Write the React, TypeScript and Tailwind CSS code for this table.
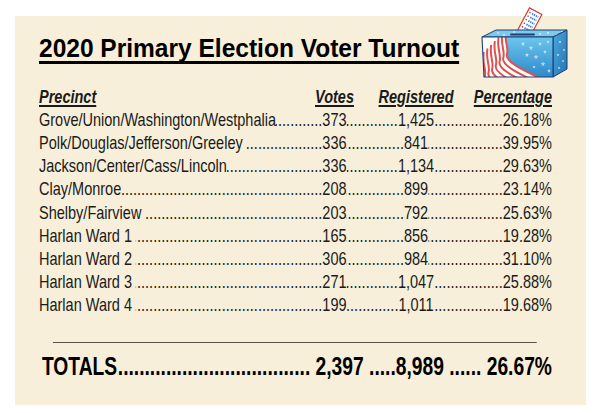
import React from "react";

const rows: [string, string, string, string][] = [
  ["Grove/Union/Washington/Westphalia", "373", "1,425", "26.18%"],
  ["Polk/Douglas/Jefferson/Greeley ", "336", "841", "39.95%"],
  ["Jackson/Center/Cass/Lincoln", "336", "1,134", "29.63%"],
  ["Clay/Monroe", "208", "899", "23.14%"],
  ["Shelby/Fairview ", "203", "792", "25.63%"],
  ["Harlan Ward 1 ", "165", "856", "19.28%"],
  ["Harlan Ward 2 ", "306", "984", "31.10%"],
  ["Harlan Ward 3 ", "271", "1,047", "25.88%"],
  ["Harlan Ward 4 ", "199", "1,011", "19.68%"],
];

const DOTS = ".".repeat(160);

function Leader({ className = "" }: { className?: string }) {
  return (
    <div className={"flex justify-end overflow-hidden whitespace-nowrap " + className}>
      <span className="shrink-0">{DOTS}</span>
    </div>
  );
}

function starPoints(cx: number, cy: number, r: number) {
  const pts: string[] = [];
  for (let i = 0; i < 10; i++) {
    const rr = i % 2 === 0 ? r : r * 0.45;
    const a = (Math.PI / 5) * i - Math.PI / 2;
    pts.push(`${(cx + rr * Math.cos(a)).toFixed(2)},${(cy + rr * Math.sin(a)).toFixed(2)}`);
  }
  return pts.join(" ");
}

function BallotBox() {
  const frontStars: [number, number, number][] = [
    [45, 40, 2], [53, 44, 2.2], [62, 40, 1.8], [49, 51, 2], [58, 53, 2.3],
    [67, 48, 1.8], [65, 60, 2.2], [71, 67, 1.8], [56, 63, 1.6], [70, 38, 1.6],
  ];
  const topStars: [number, number, number][] = [
    [26, 31, 1.3], [36, 28, 1.2], [62, 30, 1.2], [70, 29, 1.3], [79, 31, 1.2], [84, 27.5, 1.1], [20, 29, 1.1],
  ];
  const sideStars: [number, number, number][] = [
    [82, 38, 1.3], [86, 46, 1.2], [80, 51, 1.3], [85, 57, 1.1], [81, 64, 1.2],
  ];
  const curve = "M28 26 C 26 38, 31 43, 29 50 S 40 64, 70 78";
  return (
    <svg width="92" height="76" viewBox="0 0 92 76" className="block shrink-0">
      <defs>
        <linearGradient id="fg" x1="0" y1="0" x2="0" y2="1">
          <stop offset="0" stopColor="#6cc6ee" />
          <stop offset="1" stopColor="#2d8acb" />
        </linearGradient>
        <linearGradient id="sg" x1="0" y1="0" x2="1" y2="1">
          <stop offset="0" stopColor="#4aa9de" />
          <stop offset="1" stopColor="#2672b2" />
        </linearGradient>
        <clipPath id="fc">
          <polygon points="4,33 75,33 75,73 6,73" />
        </clipPath>
      </defs>
      <g transform="translate(45 31) rotate(28)">
        <rect x="-7" y="-27" width="14" height="27" fill="#ffffff" stroke="#d23b3b" strokeWidth="1.2" />
        {[-23, -19, -15, -11, -7].map((y) => (
          <line key={y} x1="-2" y1={y} x2="5" y2={y} stroke="#3a7fd0" strokeWidth="1.8" strokeDasharray="1.4 0.7" />
        ))}
        {[-23, -19, -15, -11, -7].map((y) => (
          <circle key={"r" + y} cx="-4.3" cy={y} r="0.8" fill="#d23b3b" />
        ))}
      </g>
      <polygon points="4,33 18,26 89,26 75,33" fill="#7ccbee" stroke="#1e3f73" strokeWidth="1" strokeLinejoin="round" />
      <path d="M33 30.5 L56 30.5" stroke="#1e3f73" strokeWidth="1.8" strokeLinecap="round" />
      {topStars.map(([x, y, r], i) => (
        <polygon key={"t" + i} points={starPoints(x, y, r)} fill="#ffffff" />
      ))}
      <polygon points="75,33 89,26 89,65 75,73" fill="url(#sg)" stroke="#1e3f73" strokeWidth="1" strokeLinejoin="round" />
      {sideStars.map(([x, y, r], i) => (
        <polygon key={"s" + i} points={starPoints(x, y, r)} fill="#ffffff" />
      ))}
      <polygon points="4,33 75,33 75,73 6,73" fill="url(#fg)" />
      <g clipPath="url(#fc)">
        <path d={curve + " L 0 78 L 0 26 Z"} fill="#ffffff" />
        {Array.from({ length: 10 }).map((_, k) => (
          <path
            key={k}
            d={curve}
            transform={`translate(${-3.7 * k} ${3.7 * k})`}
            fill="none"
            stroke="#e0504e"
            strokeWidth="2"
          />
        ))}
      </g>
      {frontStars.map(([x, y, r], i) => (
        <g key={"f" + i}>
          <polygon points={starPoints(x, y, r)} fill="#ffffff" />
          <circle cx={x} cy={y} r={r * 0.3} fill="#3a8fd0" />
        </g>
      ))}
      <polygon points="4,33 75,33 75,73 6,73" fill="none" stroke="#1e3f73" strokeWidth="1.1" strokeLinejoin="round" />
    </svg>
  );
}

const UL = "underline decoration-[1.5px] underline-offset-[2px]";

export default function App() {
  return (
    <div className="w-[600px] h-[413px] overflow-hidden bg-white pt-[16px] pl-[15px] font-['Liberation_Sans',Arial,sans-serif] text-[#1a1a1a]">
      <div className="w-[571px] h-[389px] bg-[#f7efd9] pt-[17px] pl-[24px] pr-[34px]">
        {/* title row */}
        <div className="flex h-[30px] items-start">
          <div className="w-[424px] shrink-0">
            <h1 className="inline-block origin-left scale-x-[0.943] text-[26px] font-bold leading-[30px] text-black underline decoration-[3px] underline-offset-[4px] [text-decoration-skip-ink:none] whitespace-nowrap">
              2020 Primary Election Voter Turnout
            </h1>
          </div>
          <div className="ml-auto -mr-[18px] -mt-[29px]">
            <BallotBox />
          </div>
        </div>

        {/* condensed table area */}
        <div className="w-[513px] overflow-hidden">
          <div className="w-[625.6px] origin-left scale-x-[0.82] mt-[22.5px] text-[17.7px] leading-[23.2px]">
            <div className="flex items-start font-bold italic">
              <div className="flex-1 min-w-0">
                <span className={UL}>Precinct</span>
              </div>
              <div className="w-[29.5px] shrink-0 flex justify-center">
                <span className={"shrink-0 whitespace-nowrap " + UL}>Votes</span>
              </div>
              <div className="w-[190.5px] shrink-0 flex">
                <div className="grow basis-0" />
                <div className="w-0 flex justify-center">
                  <span className={"shrink-0 whitespace-nowrap " + UL}>Registered</span>
                </div>
                <div className="grow basis-[21.1px]" />
              </div>
              <div className="w-[60px] shrink-0 flex justify-end">
                <span className={"shrink-0 whitespace-nowrap " + UL}>Percentage</span>
              </div>
            </div>

            {rows.map(([name, votes, reg, pct]) => (
              <div key={name} className="flex items-start">
                <div className="flex-1 min-w-0 flex">
                  <span className="shrink-0 whitespace-pre">{name}</span>
                  <Leader className="flex-1 min-w-0" />
                </div>
                <span className="shrink-0 whitespace-nowrap">{votes}</span>
                <div className="w-[190.5px] shrink-0 flex">
                  <Leader className="grow basis-0 min-w-0" />
                  <span className="shrink-0 whitespace-nowrap">{reg}</span>
                  <Leader className="grow basis-[21.1px] min-w-0" />
                </div>
                <span className="shrink-0 whitespace-nowrap">{pct}</span>
              </div>
            ))}

            <div className="mt-[24px] ml-[17.1px] w-[590.2px] h-[1.5px] bg-[#57524a]" />
          </div>
        </div>

        <div className="w-[513px] overflow-hidden">
          <div className="w-[693.2px] origin-left scale-x-[0.74] mt-[9px] pl-[4px] flex items-start text-[26px] font-bold leading-[28px] text-black">
            <span className="shrink-0">TOTALS</span>
            <Leader className="flex-1 min-w-0" />
            <span className="shrink-0 whitespace-pre"> 2,397 .....8,989 ...... 26.67%</span>
          </div>
        </div>
      </div>
    </div>
  );
}
